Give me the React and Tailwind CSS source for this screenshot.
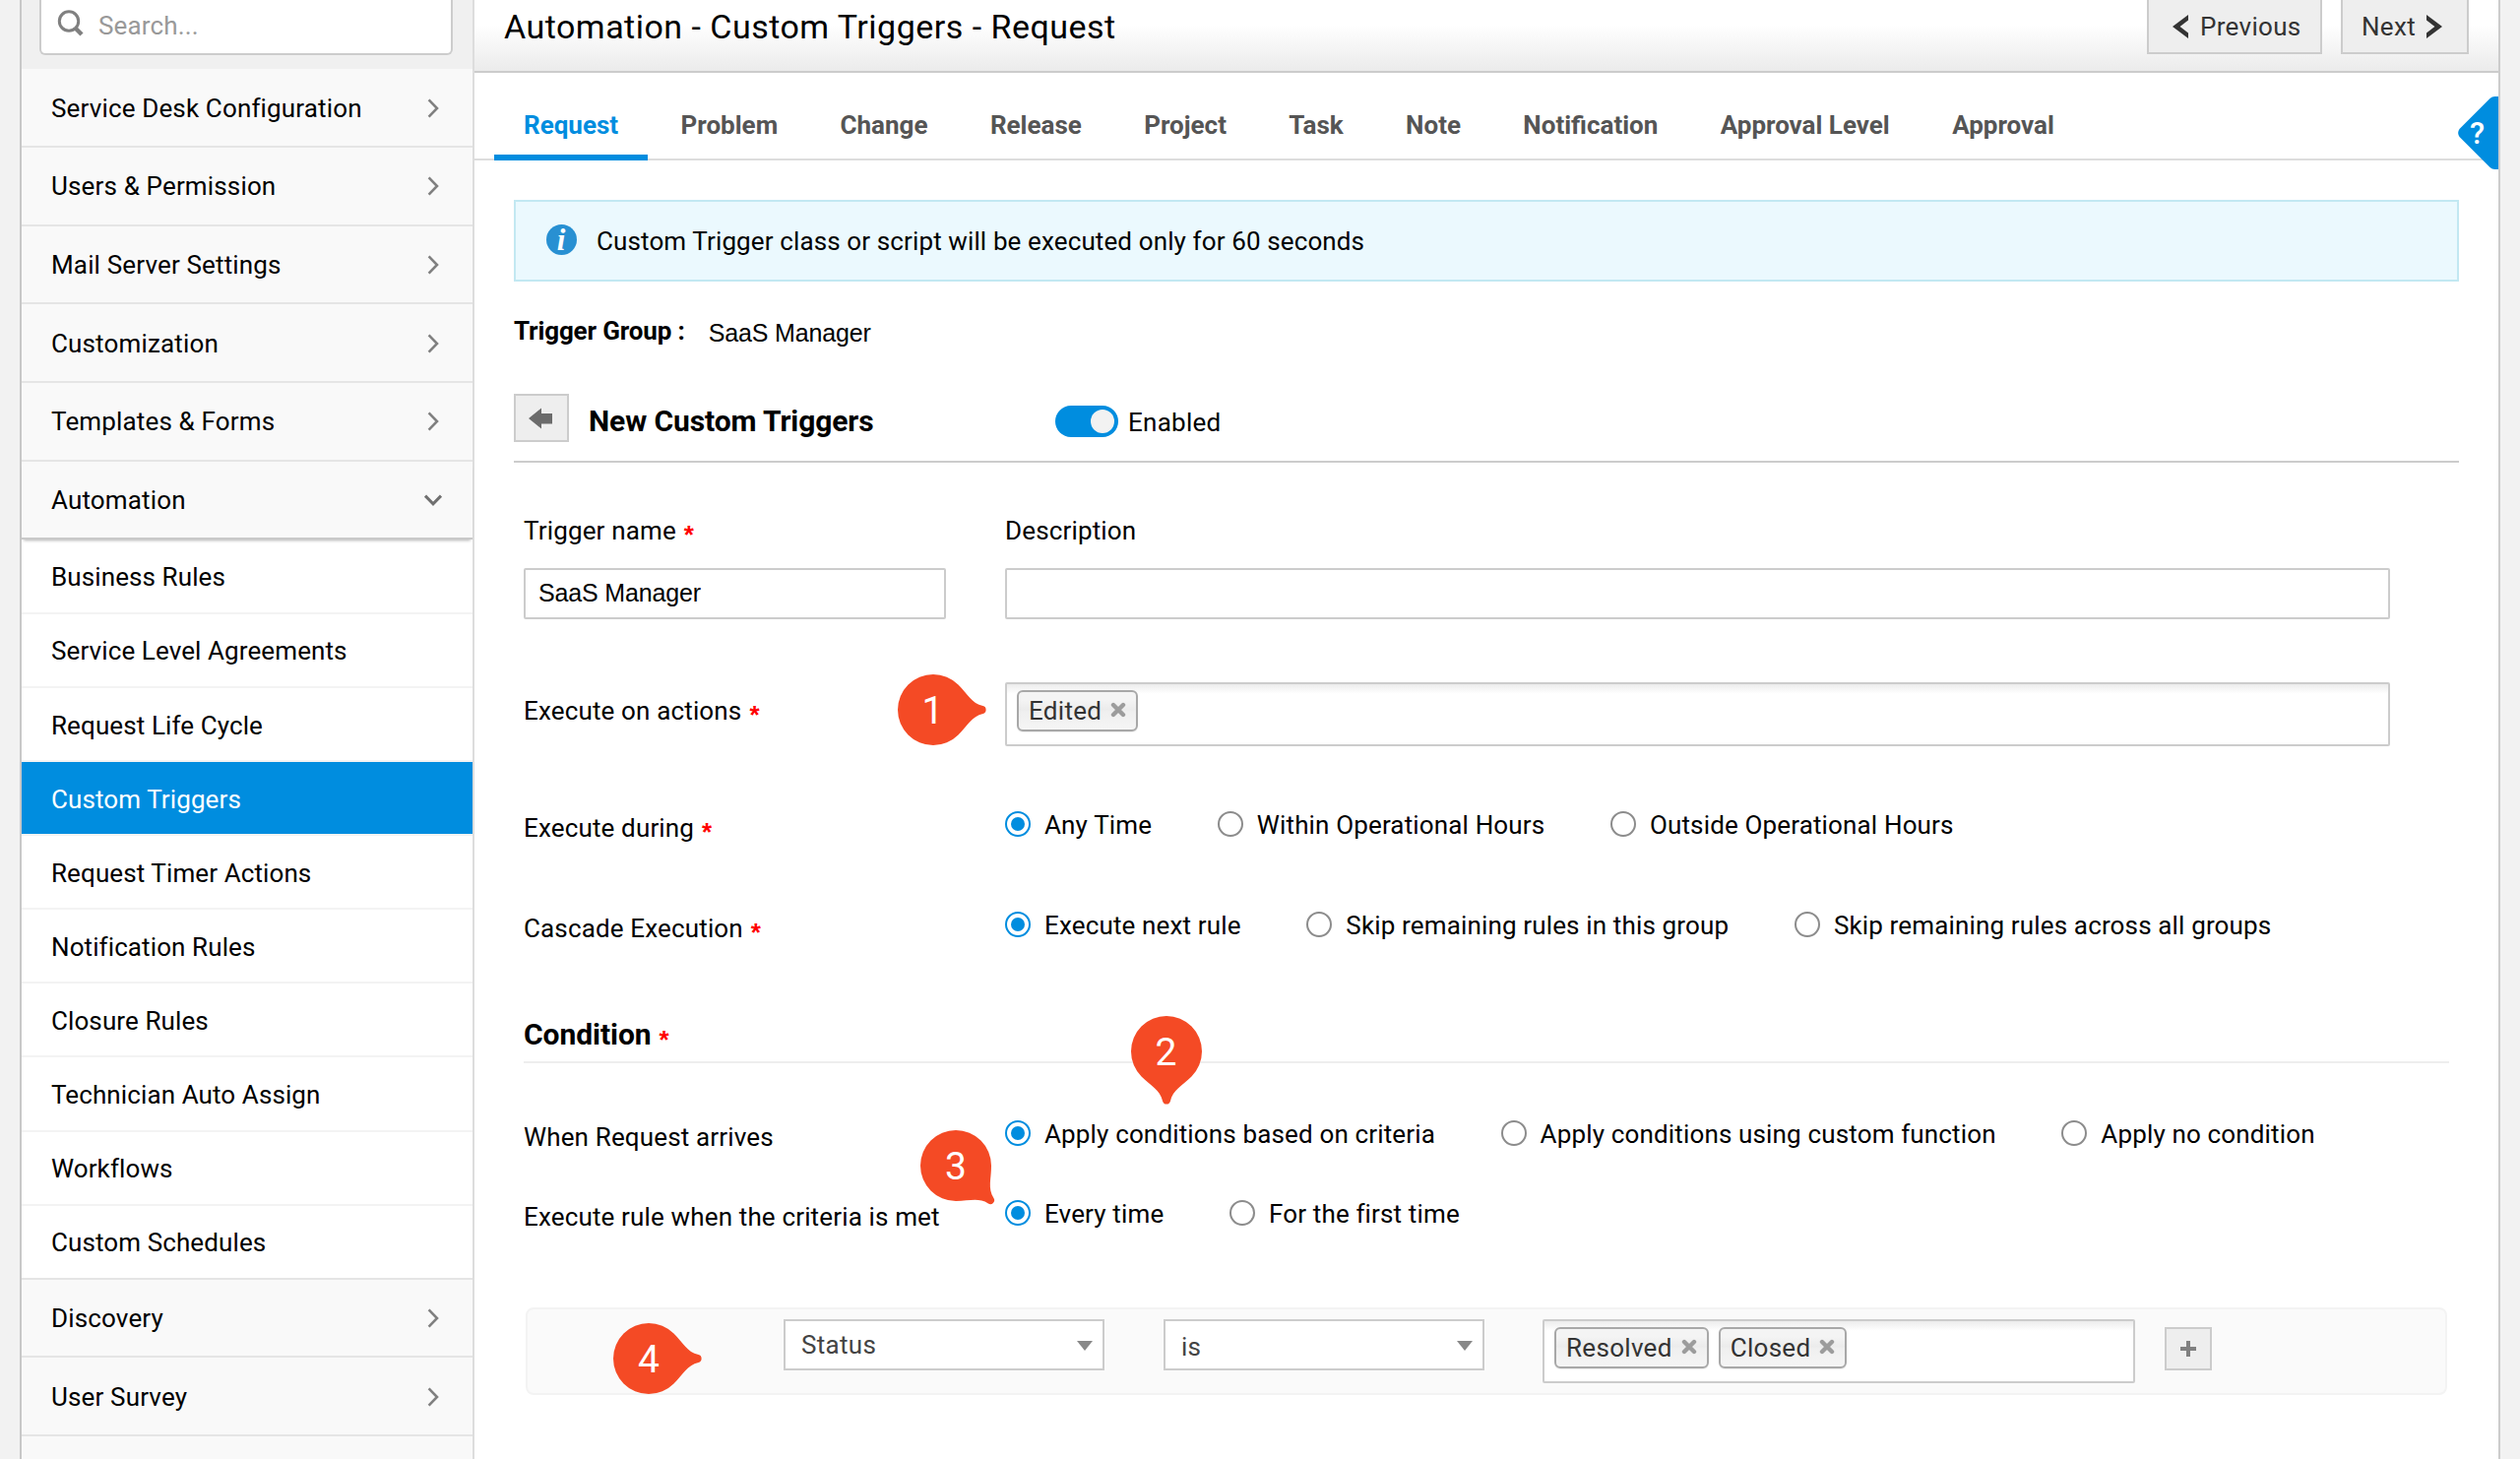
import React from "react";

const MARKER_PATH =
  "M25.46 -25.46 C35 -16 39 -6.5 50.5 -3.9 A4 4 0 0 1 50.5 3.9 C39 6.5 35 16 25.46 25.46 A36 36 0 1 1 25.46 -25.46 Z";

/* Numbered annotation pin; `className` anchors the centre of the round part. */
function Marker({ n, rotate = 0, className }) {
  return (
    <div className={`absolute z-10 h-0 w-0 ${className}`}>
      <svg viewBox="-60 -60 120 120" className="absolute -left-[60px] -top-[60px] h-[120px] w-[120px]">
        <path d={MARKER_PATH} fill="#f44a25" transform={`rotate(${rotate})`} />
      </svg>
      <div className="absolute -left-[30px] -top-[29px] flex h-[60px] w-[60px] items-center justify-center text-[39px] leading-none text-white">
        {n}
      </div>
    </div>
  );
}

function ChevronRight() {
  return (
    <svg viewBox="0 0 12 20" className="mr-[34px] h-5 w-3" fill="none" stroke="#808080" strokeWidth="2.6">
      <path d="M1.6 1.4 L10 10 L1.6 18.6" />
    </svg>
  );
}

function ChevronDown() {
  return (
    <svg viewBox="0 0 20 12" className="mr-[30px] h-3 w-5" fill="none" stroke="#707070" strokeWidth="3">
      <path d="M2 1.6 L10 9.8 L18 1.6" />
    </svg>
  );
}

function MenuItem({ label, open }) {
  return (
    <div
      className={`flex h-[79.67px] items-center justify-between border-b-2 bg-[#f9f9f9] pl-[30px] pt-px tracking-[0.15px] ${
        open ? "relative border-[#c9c9c9] shadow-[0_3px_3px_-2px_rgba(0,0,0,0.3)]" : "border-[#e5e5e5]"
      }`}
    >
      <span>{label}</span>
      {open ? <ChevronDown /> : <ChevronRight />}
    </div>
  );
}

const TOP_MENU = ["Service Desk Configuration", "Users & Permission", "Mail Server Settings", "Customization", "Templates & Forms"];
const SUB_MENU = [
  "Business Rules",
  "Service Level Agreements",
  "Request Life Cycle",
  "Custom Triggers",
  "Request Timer Actions",
  "Notification Rules",
  "Closure Rules",
  "Technician Auto Assign",
  "Workflows",
  "Custom Schedules",
];

function Sidebar() {
  return (
    <aside className="flex w-[462px] shrink-0 flex-col border-x-2 border-l-[#c8c8c8] border-r-[#dddddd] bg-[#f9f9f9]">
      <div className="h-[70.3px] shrink-0 bg-[#f0f0f0] pl-[18px] pr-[20px]">
        <div className="flex h-14 items-center rounded-b-md border-x-2 border-b-2 border-[#cccccc] bg-white pl-4 text-[#999999]">
          <svg viewBox="0 0 28 28" className="mb-[8px] h-7 w-7" fill="none" stroke="#808080">
            <circle cx="12" cy="12.5" r="9.7" strokeWidth="3" />
            <path d="M18.5 19.5 L25 26" strokeWidth="4.4" />
          </svg>
          <span className="mb-[2px] ml-[14px] tracking-[0.15px]">Search...</span>
        </div>
      </div>
      {TOP_MENU.map((t) => (
        <MenuItem key={t} label={t} />
      ))}
      <MenuItem label="Automation" open />
      <div className="bg-white pt-[0.6px]">
        {SUB_MENU.map((t, i) => (
          <div
            key={t}
            className={`flex h-[75.1px] items-center border-b-2 pl-[30px] pt-[2px] tracking-[0.1px] ${
              t === "Custom Triggers" ? "bg-[#008ddf] text-white" : ""
            } ${i === SUB_MENU.length - 1 ? "border-[#e5e5e5]" : "border-[#f3f3f3]"}`}
          >
            {t}
          </div>
        ))}
      </div>
      <MenuItem label="Discovery" />
      <MenuItem label="User Survey" />
    </aside>
  );
}

const TABS = ["Request", "Problem", "Change", "Release", "Project", "Task", "Note", "Notification", "Approval Level", "Approval"];

function Header() {
  return (
    <header className="flex h-[74px] items-start justify-between border-b-2 border-[#cccccc] bg-linear-to-b from-white from-35% to-[#ebebeb] pl-[30px] pr-[30px]">
      <h1 className="h-[54px] text-[34px] leading-[54px] tracking-[0.48px]">Automation - Custom Triggers - Request</h1>
      <div className="flex gap-[19px] tracking-[0.3px] text-[#333333]">
        <button className="flex h-[55px] w-[178px] items-center border-x-2 border-b-2 border-[#cccccc] bg-[#eeeeee] pl-6">
          <svg viewBox="0 0 16 24" className="h-6 w-4" fill="#333333">
            <path d="M0 12 L16 0 V5.6 L7.6 12 L16 18.4 V24 Z" />
          </svg>
          <span className="ml-[12px]">Previous</span>
        </button>
        <button className="flex h-[55px] w-[130px] items-center border-x-2 border-b-2 border-[#cccccc] bg-[#eeeeee] pl-[19px]">
          <span>Next</span>
          <svg viewBox="0 0 16 24" className="ml-[11px] h-6 w-4" fill="#333333">
            <path d="M16 12 L0 0 V5.6 L8.4 12 L0 18.4 V24 Z" />
          </svg>
        </button>
      </div>
    </header>
  );
}

function Tabs() {
  return (
    <nav className="flex h-[89px] items-stretch gap-[3.4px] border-b-2 border-[#dddddd] pl-5 font-bold text-[#555555]">
      {TABS.map((t, i) => (
        <div
          key={t}
          className={`-mb-[2px] flex items-center whitespace-nowrap px-[30px] ${
            i === 0 ? "border-b-[6px] border-[#008ddf] pt-[23px] text-[#008ddf]" : "pt-[17px]"
          }`}
        >
          {t}
        </div>
      ))}
    </nav>
  );
}

function Star() {
  return (
    <span className="relative top-[4px] ml-[8px] font-['Liberation_Sans',sans-serif] text-[26px] font-bold leading-none text-[#ff0000]">
      *
    </span>
  );
}

function Radio({ label, on }) {
  return (
    <label className="flex items-center">
      <span
        className={`flex h-[26px] w-[26px] items-center justify-center rounded-full border-2 bg-white ${
          on ? "border-[#008ddf]" : "border-[#8c8c8c]"
        }`}
      >
        {on && <span className="h-[14px] w-[14px] rounded-full bg-[#008ddf]" />}
      </span>
      <span className="ml-[14px] pt-[2px]">{label}</span>
    </label>
  );
}

function RadioRow({ label, star, options, className }) {
  return (
    <div className={`flex h-10 items-center ${className}`}>
      <div className="w-[489px] pt-[8px]">
        {label}
        {star && <Star />}
      </div>
      <div className="flex gap-[66.6px]">
        {options.map((o, i) => (
          <Radio key={o} label={o} on={i === 0} />
        ))}
      </div>
    </div>
  );
}

function Chip({ label }) {
  return (
    <span className="flex h-[42px] items-center rounded-md border-2 border-[#a8a8a8] bg-[linear-gradient(#f4f4f4_20%,#ebebeb_48%,#efefef_50%,#f5f5f5)] pl-[10px] pr-[10px] tracking-[0.3px] text-[#333333] shadow-[0_1px_1px_rgba(0,0,0,0.08)]">
      {label}
      <svg viewBox="0 0 16 16" className="mb-[3px] ml-[9px] h-4 w-4" stroke="#9c9c9c" strokeWidth="4.4" strokeLinecap="round">
        <path d="M3 3 L13 13 M13 3 L3 13" />
      </svg>
    </span>
  );
}

function ChipBox({ items, className }) {
  return (
    <div
      className={`flex h-[65px] gap-[10px] rounded-[2px] border-2 border-[#cccccc] bg-white bg-[linear-gradient(#ececec_0%,#ffffff_16%)] pl-[10px] pt-[6px] ${className}`}
    >
      {items.map((t) => (
        <Chip key={t} label={t} />
      ))}
    </div>
  );
}

function Select({ label, className }) {
  return (
    <div className="flex h-[52px] w-[326px] items-center justify-between border-2 border-[#cccccc] bg-white pl-[16px] pr-[10px] tracking-[0.3px] text-[#444444]">
      <span className={className}>{label}</span>
      <svg viewBox="0 0 16 10" className="mt-[2px] h-[10px] w-4" fill="#888888">
        <path d="M0 0 H16 L8 10 Z" />
      </svg>
    </div>
  );
}

function HelpTab() {
  return (
    <div className="absolute right-0 top-[98px] h-[74px] w-[41px]">
      <svg viewBox="0 0 41 74" className="absolute inset-0 h-[74px] w-[41px]" fill="#008ddf">
        <path d="M41 0 H37.5 Q34.5 0 32.5 2 L1.5 33 Q-1.2 37 1.5 41 L32.5 72 Q34.5 74 37.5 74 H41 Z" />
      </svg>
      <span className="absolute left-[12px] top-[24px] text-[31px] font-medium leading-7 text-white">?</span>
    </div>
  );
}

function TriggerForm() {
  return (
    <div className="ml-[50px] w-[1956px] tracking-[0.15px]">
      <div className="mt-[54px] flex">
        <div className="w-[489px]">
          <div className="h-[30px] leading-[30px]">
            Trigger name
            <Star />
          </div>
          <div className="mt-[23px] flex h-[52px] w-[429px] items-center rounded-[2px] border-2 border-[#cccccc] pb-[3px] pl-[13px] font-['Liberation_Sans',sans-serif] text-[25px] tracking-[-0.15px]">
            SaaS Manager
          </div>
        </div>
        <div className="w-[1407px]">
          <div className="h-[30px] leading-[30px]">Description</div>
          <div className="mt-[23px] h-[52px] rounded-[2px] border-2 border-[#cccccc]" />
        </div>
      </div>

      <div className="relative mt-[64px] flex items-center">
        <div className="mb-[7px] w-[489px]">
          Execute on actions
          <Star />
        </div>
        <ChipBox items={["Edited"]} className="w-[1407px]" />
        <Marker n="1" className="left-[415.5px] top-[28px]" />
      </div>

      <RadioRow className="mt-[59px]" label="Execute during" star options={["Any Time", "Within Operational Hours", "Outside Operational Hours"]} />
      <RadioRow
        className="mt-[62px]"
        label="Cascade Execution"
        star
        options={["Execute next rule", "Skip remaining rules in this group", "Skip remaining rules across all groups"]}
      />

      <div className="relative flex h-[121px] items-end border-b-2 border-[#eeeeee] pb-[9px]">
        <h3 className="text-[30px] font-bold leading-9 tracking-[-0.05px]">
          Condition
          <Star />
        </h3>
        <Marker n="2" rotate={90} className="left-[652.5px] top-[109px]" />
      </div>

      <RadioRow
        className="mt-[51px]"
        label="When Request arrives"
        options={["Apply conditions based on criteria", "Apply conditions using custom function", "Apply no condition"]}
      />
      <div className="relative mt-[41px]">
        <RadioRow label="Execute rule when the criteria is met" options={["Every time", "For the first time"]} />
        <Marker n="3" rotate={45} className="left-[439px] top-[-28px]" />
      </div>

      <div className="relative ml-[2px] mt-[76px] flex h-[89px] w-[1952px] items-start rounded-lg border-2 border-[#f3f3f3] bg-[#fafafa] pl-[260px] pt-[10px]">
        <Select label="Status" />
        <div className="w-[60px]" />
        <Select label="is" className="pt-[3px]" />
        <ChipBox items={["Resolved", "Closed"]} className="ml-[59px] w-[602px]" />
        <button className="ml-[30px] mt-[8px] flex h-[44px] w-[48px] items-center justify-center border-2 border-[#cccccc] bg-[#eeeeee]">
          <svg viewBox="0 0 18 18" className="h-[18px] w-[18px]" stroke="#808080" strokeWidth="4">
            <path d="M9 1 V17 M1 9 H17" />
          </svg>
        </button>
        <Marker n="4" className="left-[123px] top-[50px]" />
      </div>
    </div>
  );
}

export default function App() {
  return (
    <div className="flex h-[1482px] w-[2560px] overflow-hidden bg-[#f2f2f2] pl-5 font-['Roboto',sans-serif] text-[26px] leading-[30px] text-black">
      <Sidebar />
      <main className="relative w-[2058px] shrink-0 border-r-2 border-[#cccccc] bg-white">
        <Header />
        <Tabs />
        <HelpTab />
        <div className="mx-10 mt-10 flex h-[83px] w-[1976px] items-center border-2 border-[#c2e8f2] bg-[#ebf9fe] pl-[31px] tracking-[0.12px]">
          <span className="mb-[3px] flex h-[31px] w-[31px] items-center justify-center rounded-full bg-[#2890d2] pr-px font-['Liberation_Serif',serif] text-[31px] font-bold italic leading-none text-white">
            i
          </span>
          <span className="ml-[20px]">Custom Trigger class or script will be executed only for 60 seconds</span>
        </div>
        <div className="ml-10 mt-5 flex h-[60px] items-center">
          <b className="font-bold tracking-[-0.15px]">Trigger Group :</b>
          <span className="ml-[24px] pt-[3px] font-['Liberation_Sans',sans-serif] text-[25px] tracking-[-0.15px]">SaaS Manager</span>
        </div>
        <div className="ml-10 flex h-[104px] w-[1976px] items-center border-b-2 border-[#cccccc] pt-[22px]">
          <button className="mb-[7px] flex h-[49px] w-[56px] items-center justify-center border-2 border-[#cccccc] bg-[#eeeeee] pr-[3px]">
            <svg viewBox="0 0 26 22" className="h-[22px] w-[26px]" fill="#6b6b6b">
              <path d="M1 11 L14 0.5 V6 H25 V16.5 H14 V21.5 Z" />
            </svg>
          </button>
          <h2 className="ml-[20px] w-[474px] text-[30px] font-bold leading-9 tracking-[-0.1px]">New Custom Triggers</h2>
          <span className="flex h-8 w-16 items-center justify-end rounded-full bg-[#008ddf] pr-1">
            <span className="h-6 w-6 rounded-full bg-[#f2f2f2]" />
          </span>
          <span className="ml-[10px] pt-[2px] tracking-[0.25px]">Enabled</span>
        </div>
        <TriggerForm />
      </main>
    </div>
  );
}
